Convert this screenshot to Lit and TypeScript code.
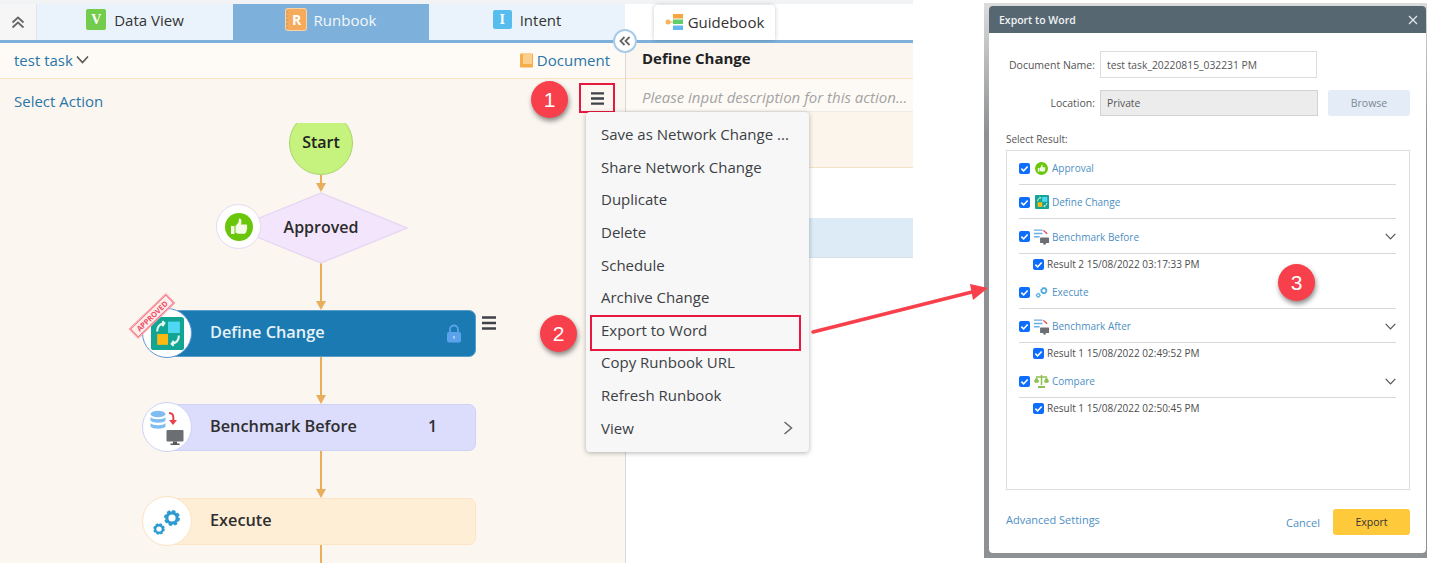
import { LitElement, html, css, svg } from 'lit';
import { customElement } from 'lit/decorators.js';

const menuItems = ['Save as Network Change ...', 'Share Network Change', 'Duplicate', 'Delete', 'Schedule', 'Archive Change', 'Export to Word', 'Copy Runbook URL', 'Refresh Runbook', 'View'];

const gear = (x: number, y: number, r: number, color: string) => svg`
  <g fill="none" stroke=${color}>
    <circle cx=${x} cy=${y} r=${r} stroke-width=${r * 0.62}></circle>
    <circle cx=${x} cy=${y} r=${r * 1.28} stroke-width=${r * 0.5} stroke-dasharray=${`${r * 0.6} ${r * 0.405}`}></circle>
  </g>`;

const defineIcon = (s: number) => html`<svg width=${s} height=${s} viewBox="0 0 32 32">
  <rect width="32" height="32" rx="2.5" fill="#12a594"></rect>
  <rect x="16.500" y="4.500" width="11.500" height="11" fill="#4fd8f4"></rect>
  <rect x="6" y="16.500" width="10.500" height="10.500" fill="#fdb813"></rect>
  <path d="M6 14c0-4 2-7 6-8M11 4l2 2-2 3M27 18c0 4-2 7-6 8M22 28l-2-2 2-3" fill="none" stroke="#e8f7f0" stroke-width="2"></path>
</svg>`;

const benchIcon = (s: number) => html`<svg width=${s} height=${s} viewBox="0 0 36 36">
  <ellipse cx="9" cy="5" rx="7.5" ry="3.2" fill="#7fbdf0"></ellipse>
  <path d="M1.5 8c2 3 13 3 15 0v3.500c-2 3-13 3-15 0zM1.500 14c2 3 13 3 15 0v3.500c-2 3-13 3-15 0z" fill="#7fbdf0"></path>
  <path d="M20 4c4 0 5 3 4 8" fill="none" stroke="#e9424c" stroke-width="2"></path>
  <path d="M20 11h8l-4 5z" fill="#e9424c"></path>
  <rect x="17.500" y="21" width="17" height="11.500" rx="1" fill="#6b6f73"></rect>
  <path d="M24 32.500h4v2h2.500v1.500h-9v-1.500H24z" fill="#55595c"></path>
</svg>`;

const smallBench = html`<svg width="17" height="17" viewBox="0 0 36 36">
  <path d="M2 3h18v3H2zM2 10h18v3H2zM2 17h12v3H2z" fill="#6aaee8"></path>
  <path d="M23 4l8 7-2 2-8-7z" fill="#e9424c"></path>
  <rect x="15" y="20" width="19" height="12" rx="1" fill="#6b6f73"></rect>
  <path d="M22 32h5v3h-5z" fill="#55595c"></path>
</svg>`;

const thumb = (s: number) => html`<svg width=${s} height=${s} viewBox="0 0 28 28">
  <circle cx="14" cy="14" r="14" fill="#69c60a"></circle>
  <path d="M6 13h3.500v8H6zM10.500 13l3-3.500 .5-4c2.500 0 3 2.500 2 6h5c1.500 0 1.500 2 .8 2.500 .8 .8 .6 2-.3 2.400 .6 1 .2 2-.6 2.300 .2 1.100-.4 2-1.400 2h-6.500l-2.500-1.200z" fill="#f4fbe9"></path>
</svg>`;

@customElement('app-root')
export class AppRoot extends LitElement {
  static styles = css`
    :host {
      display: block;
      position: relative;
      width: 1431px;
      height: 563px;
      overflow: hidden;
      background: #fff;
      font-family: "Open Sans", sans-serif;
      color: #333;
    }
    .page { display: flex; height: 563px; }

    /* left screenshot */
    .app {
      position: relative;
      width: 913px;
      flex: none;
      display: flex;
      flex-direction: column;
      padding-top: 4px;
      box-sizing: border-box;
      overflow: hidden;
      background: linear-gradient(#f2f3f5 4px, #fff 4px);
    }
    .tabbar {
      display: flex;
      height: 36px;
      flex: none;
      border-bottom: 3px solid #7db0da;
    }
    .tabs { display: flex; width: 625px; flex: none; }
    .collapse {
      width: 36px;
      flex: none;
      display: flex;
      align-items: center;
      justify-content: center;
      background: #f6f6f6;
      border-right: 1px solid #dbe6f0;
    }
    .tab {
      flex: 1;
      display: flex;
      align-items: center;
      justify-content: center;
      gap: 8px;
      padding-bottom: 5px;
      background: #eaf3fb;
      font-size: 15px;
      color: #333;
    }
    .tab.active { background: #7db0da; color: #f4f8fb; }
    .tab-sq {
      width: 20px;
      height: 21px;
      border-radius: 2px;
      display: flex;
      align-items: center;
      justify-content: center;
      color: #fff;
      font: bold 14px "Liberation Serif", serif;
    }
    .tab-sq.v { background: #74cc4c; }
    .tab-sq.i { background: #56bdee; width: 19px; height: 19px; }
    .tab-sq.r {
      background: #f6ab5c;
      border-left: 2px dotted #d9a268;
      width: 18px;
      font: bold 14px "Open Sans", sans-serif;
      box-shadow: 0 0 0 1px #f9d3a4;
    }
    .guide-wrap { flex: 1; display: flex; padding-left: 29px; }
    .guide {
      width: 121px;
      height: 35px;
      margin-top: 1px;
      box-sizing: border-box;
      padding-bottom: 2px;
      display: flex;
      align-items: center;
      justify-content: center;
      gap: 4px;
      background: #fff;
      border-radius: 4px 4px 0 0;
      box-shadow: 0 0 4px rgba(0,0,0,.22);
      font-size: 15px;
      color: #333;
    }

    .body { flex: 1; display: flex; min-height: 0; }
    .left {
      position: relative;
      width: 625px;
      flex: none;
      background: #fbf6f0;
      border-right: 1px solid #d9d9d9;
    }
    .subhead {
      height: 36px;
      box-sizing: border-box;
      display: flex;
      align-items: center;
      justify-content: space-between;
      padding: 0 15px 2px 14px;
      background: #fefbf6;
      border-bottom: 1px solid #fbe2bf;
      font-size: 15px;
      color: #2a76a8;
    }
    .task { display: flex; align-items: center; gap: 3px; }
    .doc { display: flex; align-items: center; gap: 3px; }
    .select {
      padding: 12px 14px 0;
      font-size: 15px;
      color: #2a76a8;
    }
    .right { flex: 1; }
    .r-head {
      height: 36px;
      box-sizing: border-box;
      display: flex;
      align-items: center;
      padding: 0 0 6px 16px;
      background: #fbf6f0;
      border-bottom: 1px solid #fbe2bf;
      font-size: 15px;
      font-weight: 700;
      color: #222;
    }
    .r-desc {
      height: 33px;
      box-sizing: border-box;
      display: flex;
      align-items: center;
      padding: 3px 0 0 16px;
      background: #fdfaf6;
      border-bottom: 1px solid #f0ebe4;
      font-size: 15px;
      font-style: italic;
      color: #a3a3a3;
      white-space: nowrap;
    }
    .r-band { height: 56px; box-sizing: border-box; background: #fcf5ec; border-bottom: 1px solid #f4e1c8; }
    .r-sel { margin-top: 50px; height: 40px; box-sizing: border-box; background: #dcebf5; border-bottom: 1px solid #d5e0e8; }

    /* flow diagram: free canvas */
    .flow { position: absolute; left: 0; top: 80px; width: 625px; height: 440px; overflow: hidden; }
    .line { position: absolute; left: 320px; width: 2px; background: #e9ae5b; }
    .head {
      position: absolute;
      left: 316px;
      width: 0;
      height: 0;
      border-left: 5px solid transparent;
      border-right: 5px solid transparent;
      border-top: 9px solid #e9ae5b;
    }
    .start {
      position: absolute;
      left: 289px;
      top: -12px;
      width: 64px;
      height: 64px;
      box-sizing: border-box;
      border-radius: 50%;
      background: #c5f37d;
      border: 1.5px solid #a8d56c;
      display: flex;
      align-items: center;
      justify-content: center;
      padding-bottom: 2px;
      font-size: 16px;
      font-weight: 600;
      color: #222;
    }
    .diamond { position: absolute; left: 235px; top: 69px; }
    .diamond-label {
      position: absolute;
      left: 253px;
      top: 69px;
      width: 136px;
      height: 70px;
      display: flex;
      align-items: center;
      justify-content: center;
      font-size: 16px;
      font-weight: 600;
      color: #2b2b2b;
    }
    .thumb-circle {
      position: absolute;
      left: 216px;
      top: 81px;
      width: 45px;
      height: 45px;
      box-sizing: border-box;
      border-radius: 50%;
      background: #fff;
      border: 1px solid #e6d9f3;
      display: flex;
      align-items: center;
      justify-content: center;
    }
    .node {
      position: absolute;
      left: 160px;
      width: 316px;
      height: 47px;
      box-sizing: border-box;
      border-radius: 7px;
      display: flex;
      align-items: center;
      padding: 0 0 3px 49px;
      font-size: 16.300px;
      font-weight: 600;
      color: #2f2f2f;
    }
    .node.define { top: 187px; background: #1a7ab1; border: 1px solid #5a9fca; color: #e8f2f8; }
    .node.bench { top: 281px; background: #dcdcfc; border: 1px solid #cdd3f7; }
    .node.exec { top: 375px; background: #ffeed6; border: 1px solid #fbe5c6; }
    .count { position: absolute; left: 267px; font-size: 16px; font-weight: 600; }
    .lock { position: absolute; left: 285px; top: 13px; }
    .disc {
      position: absolute;
      left: 142px;
      width: 50px;
      height: 50px;
      box-sizing: border-box;
      border-radius: 50%;
      background: #fff;
      display: flex;
      align-items: center;
      justify-content: center;
    }
    .disc.define { top: 185px; border: 1.5px solid #5f96d3; }
    .disc.bench { top: 279px; border: 1.5px solid #ccd3f7; }
    .disc.exec { top: 373px; border: 1.5px solid #fbe3c0; }
    .stamp {
      position: absolute;
      left: 127px;
      top: 187px;
      width: 50px;
      height: 12px;
      box-sizing: border-box;
      border: 1px solid #f2707f;
      outline: 1px solid #f8a4ae;
      background: #fdeeee;
      transform: rotate(-44deg);
      display: flex;
      align-items: center;
      justify-content: center;
      font-size: 7.500px;
      font-weight: 700;
      color: #ee4f62;
    }
    .node-menu { position: absolute; left: 482px; top: 193px; }

    .burger { display: block; }
    .burger-box {
      position: absolute;
      left: 579px;
      top: 40px;
      width: 36px;
      height: 30px;
      box-sizing: border-box;
      border: 2px solid #e8173f;
      display: flex;
      align-items: center;
      justify-content: center;
    }

    /* round collapse handle on the divider */
    .handle {
      position: absolute;
      left: 613px;
      top: 29px;
      width: 24px;
      height: 24px;
      box-sizing: border-box;
      border-radius: 50%;
      background: #fff;
      border: 2px solid #a9cbe8;
      display: flex;
      align-items: center;
      justify-content: center;
    }

    /* context menu */
    .menu {
      position: absolute;
      left: 586px;
      top: 112px;
      width: 223px;
      height: 340px;
      box-sizing: border-box;
      padding: 6px 0 0 15px;
      background: #f7f7f7;
      border-radius: 4px;
      box-shadow: 0 1px 5px rgba(0,0,0,.3);
    }
    .menu-item {
      height: 32.600px;
      display: flex;
      align-items: center;
      justify-content: space-between;
      padding-right: 16px;
      font-size: 15px;
      color: #3c3f45;
      white-space: nowrap;
    }
    .export-box {
      position: absolute;
      left: 590px;
      top: 315px;
      width: 211px;
      height: 36px;
      box-sizing: border-box;
      border: 2px solid #e8173f;
    }

    /* annotations */
    .mark {
      position: absolute;
      width: 37px;
      height: 37px;
      border-radius: 50%;
      background: #f7404b;
      box-shadow: 1px 3px 5px rgba(0,0,0,.45);
      display: flex;
      align-items: center;
      justify-content: center;
      color: #fff;
      font: 21px "Liberation Sans", sans-serif;
    }
    .arrow { position: absolute; left: 800px; top: 270px; }

    /* export dialog */
    .shot {
      margin: 3px 0 0 71px;
      width: 443px;
      height: 555px;
      box-sizing: border-box;
      padding: 3px 1px 5px 5px;
      background: linear-gradient(#dcdcdc, #8d9193 130px);
      flex: none;
    }
    .dialog {
      height: 547px;
      display: flex;
      flex-direction: column;
      background: #fff;
      border-radius: 4px;
      overflow: hidden;
      font-size: 10px;
      color: #555;
    }
    .dlg-head {
      height: 27px;
      flex: none;
      display: flex;
      align-items: center;
      justify-content: space-between;
      padding: 0 8px 0 10px;
      background: #566772;
      color: #f0f3f4;
      font-size: 10.5px;
      font-weight: 600;
    }
    .dlg-body { flex: 1; display: flex; flex-direction: column; padding: 18px 16px 18px 17px; }
    .field { display: flex; align-items: center; gap: 5px; }
    .field + .field { margin-top: 12px; }
    .field label { width: 89px; flex: none; text-align: right; font-size: 10.5px; color: #555; }
    .input {
      width: 217px;
      height: 27px;
      box-sizing: border-box;
      display: flex;
      align-items: center;
      padding-left: 6px;
      border: 1px solid #ddd;
      font-size: 10.3px;
      color: #555;
    }
    .input.off { height: 26px; width: 218px; background: #ececec; border-color: #d2d2d2; }
    .browse {
      width: 82px;
      height: 26px;
      margin-left: 5px;
      display: flex;
      align-items: center;
      justify-content: center;
      background: #e3ecf7;
      border-radius: 3px;
      color: #7c8894;
      font-size: 10.5px;
    }
    .sel-label { margin-top: 16px; font-size: 10px; color: #555; }
    .results {
      height: 340px;
      box-sizing: border-box;
      margin-top: 4px;
      padding: 0 13px 0 12px;
      border: 1px solid #ddd;
    }
    .res {
      height: 35px;
      box-sizing: border-box;
      display: flex;
      align-items: center;
      gap: 1px;
      padding-top: 1px;
      border-bottom: 1px solid #d8d8d8;
      color: #4d8fc4;
      font-size: 10px;
    }
    .res.short { height: 33px; padding-top: 0; }
    .res.mid { height: 34px; }
    .res .spacer { flex: 1; }
    .res-ico { width: 17px; height: 17px; margin-right: 1px; display: flex; align-items: center; justify-content: center; }
    .sub {
      height: 22px;
      box-sizing: border-box;
      display: flex;
      align-items: center;
      gap: 1px;
      padding: 0 0 2px 14px;
      font-size: 10px;
      color: #4c4c4c;
    }
    .check {
      width: 11px;
      height: 11px;
      flex: none;
      margin-right: 2px;
      border-radius: 2px;
      background: #0d6efd;
      display: flex;
      align-items: center;
      justify-content: center;
    }
    .dlg-foot { display: flex; align-items: center; margin-top: 19px; }
    .adv { color: #4d8fc4; font-size: 11px; margin-top: -5px; }
    .foot-right { margin-left: auto; display: flex; align-items: center; gap: 13px; }
    .cancel { color: #4d8fc4; font-size: 11px; }
    .export {
      width: 77px;
      height: 26px;
      display: flex;
      align-items: center;
      justify-content: center;
      background: #ffc93c;
      border-radius: 3px;
      color: #333;
      font-size: 10.5px;
    }
  `;

  private burger(w: number) {
    return html`<svg class="burger" width=${w} height=${w} viewBox="0 0 14 14"><path d="M0 1.500h14M0 7h14M0 12.500h14" stroke="#3f4247" stroke-width="2.600"></path></svg>`;
  }

  private check() {
    return html`<span class="check"><svg width="9" height="9" viewBox="0 0 10 10"><path d="M1.500 5.200l2.500 2.500 4.500-5" fill="none" stroke="#fff" stroke-width="1.800"></path></svg></span>`;
  }

  private chevron() {
    return html`<svg width="11" height="7" viewBox="0 0 11 7"><path d="M.7 .8l4.800 5 4.800-5" fill="none" stroke="#555" stroke-width="1.200"></path></svg>`;
  }

  private tabs() {
    return html`<div class="tabbar">
      <div class="tabs">
        <div class="collapse"><svg width="14" height="13" viewBox="0 0 14 13"><path d="M1.500 6.500L7 1.500l5.500 5M1.500 11.500L7 6.500l5.500 5" fill="none" stroke="#666" stroke-width="1.800"></path></svg></div>
        <div class="tab"><span class="tab-sq v">V</span>Data View</div>
        <div class="tab active"><span class="tab-sq r">R</span>Runbook</div>
        <div class="tab"><span class="tab-sq i">I</span>Intent</div>
      </div>
      <div class="guide-wrap">
        <div class="guide">
          <svg width="19" height="20" viewBox="0 0 19 20">
            <circle cx="3" cy="10" r="2.500" fill="#f7b25c"></circle>
            <path d="M5 10h3" stroke="#f7b25c" stroke-width="1"></path>
            <rect x="8" y="2" width="10" height="4.500" fill="#f7a440"></rect>
            <rect x="8" y="7.500" width="10" height="4.500" fill="#5fcf6a"></rect>
            <rect x="8" y="13.500" width="10" height="4.500" fill="#62b8ee"></rect>
          </svg>
          Guidebook
        </div>
      </div>
    </div>`;
  }

  private flow() {
    return html`<div class="flow">
      <div class="line" style="top:52px;height:10px"></div><div class="head" style="top:60px"></div>
      <div class="line" style="top:139px;height:40px"></div><div class="head" style="top:178px"></div>
      <div class="line" style="top:233px;height:40px"></div><div class="head" style="top:272px"></div>
      <div class="line" style="top:328px;height:40px"></div><div class="head" style="top:366px"></div>
      <div class="line" style="top:421px;height:19px"></div>

      <div class="start">Start</div>
      <svg class="diamond" width="175" height="72" viewBox="0 0 175 72"><path d="M86 1l86 35-86 35-86-35z" fill="#f3e6fc" stroke="#e7d8f3" stroke-width="1.500"></path></svg>
      <div class="diamond-label">Approved</div>
      <div class="thumb-circle">${thumb(28)}</div>

      <div class="node define">Define Change
        <svg class="lock" width="16" height="19" viewBox="0 0 16 19"><path d="M4 9V5.500a4 4 0 018 0V9" fill="none" stroke="#5aa2ec" stroke-width="1.800"></path><rect x="1" y="8" width="14" height="10.500" rx="2" fill="#5aa2ec"></rect><rect x="7.300" y="12" width="1.400" height="2.500" fill="#cfe4fa"></rect></svg>
      </div>
      <div class="disc define">${defineIcon(33)}</div>
      <div class="stamp">APPROVED</div>
      <div class="node-menu">${this.burger(14)}</div>

      <div class="node bench">Benchmark Before<span class="count">1</span></div>
      <div class="disc bench">${benchIcon(36)}</div>

      <div class="node exec">Execute</div>
      <div class="disc exec"><svg width="30" height="28" viewBox="0 0 30 28">${gear(20, 11, 5.200, '#2e9bd0')}${gear(7, 22, 3.800, '#2e9bd0')}</svg></div>
    </div>`;
  }

  private dialog() {
    return html`<div class="shot"><div class="dialog">
      <div class="dlg-head">Export to Word
        <svg width="10" height="10" viewBox="0 0 10 10"><path d="M1 1l8 8M9 1L1 9" stroke="#e4e9ec" stroke-width="1.200"></path></svg>
      </div>
      <div class="dlg-body">
        <div class="field"><label>Document Name:</label><div class="input">test task_20220815_032231 PM</div></div>
        <div class="field"><label>Location:</label><div class="input off">Private</div><div class="browse">Browse</div></div>
        <div class="sel-label">Select Result:</div>
        <div class="results">
          <div class="res mid">${this.check()}<span class="res-ico">${thumb(13)}</span>Approval</div>
          <div class="res mid">${this.check()}<span class="res-ico">${defineIcon(14)}</span>Define Change</div>
          <div class="res">${this.check()}<span class="res-ico">${smallBench}</span>Benchmark Before<span class="spacer"></span>${this.chevron()}</div>
          <div class="sub">${this.check()}Result 2 15/08/2022 03:17:33 PM</div>
          <div class="res short">${this.check()}<span class="res-ico"><svg width="14" height="13" viewBox="0 0 30 28">${gear(19, 10, 5, '#4aa8dc')}${gear(7, 20, 3.500, '#4aa8dc')}</svg></span>Execute</div>
          <div class="res mid">${this.check()}<span class="res-ico">${smallBench}</span>Benchmark After<span class="spacer"></span>${this.chevron()}</div>
          <div class="sub">${this.check()}Result 1 15/08/2022 02:49:52 PM</div>
          <div class="res short">${this.check()}<span class="res-ico"><svg width="15" height="14" viewBox="0 0 15 14"><path d="M7.500 1v10M2 3h11" stroke="#8cc152" stroke-width="1.500"></path><path d="M0 7l2.500-4L5 7a2.500 2 0 01-5 0zM10 7l2.500-4L15 7a2.500 2 0 01-5 0zM4 12h7v2H4z" fill="#8cc152"></path></svg></span>Compare<span class="spacer"></span>${this.chevron()}</div>
          <div class="sub">${this.check()}Result 1 15/08/2022 02:50:45 PM</div>
        </div>
        <div class="dlg-foot">
          <span class="adv">Advanced Settings</span>
          <div class="foot-right"><span class="cancel">Cancel</span><div class="export">Export</div></div>
        </div>
      </div>
    </div></div>`;
  }

  render() {
    return html`<div class="page">
      <div class="app">
        ${this.tabs()}
        <div class="body">
          <div class="left">
            <div class="subhead">
              <span class="task">test task
                <svg width="13" height="9" viewBox="0 0 13 9"><path d="M1 1.500l5.500 6 5.500-6" fill="none" stroke="#555" stroke-width="1.600"></path></svg>
              </span>
              <span class="doc">
                <svg width="14" height="16" viewBox="0 0 14 16"><rect x="0" y="1.500" width="13" height="14" rx="1" fill="#f6ae4b"></rect><rect x="3" y="1" width="9" height="11" fill="#fbd08f"></rect></svg>
                Document
              </span>
            </div>
            <div class="select">Select Action</div>
            ${this.flow()}
            <div class="burger-box">${this.burger(13)}</div>
          </div>
          <div class="right">
            <div class="r-head">Define Change</div>
            <div class="r-desc">Please input description for this action...</div>
            <div class="r-band"></div>
            <div class="r-sel"></div>
          </div>
        </div>
        <div class="handle"><svg width="12" height="10" viewBox="0 0 12 10"><path d="M5.500 1L1.500 5l4 4M10.500 1l-4 4 4 4" fill="none" stroke="#666" stroke-width="1.800"></path></svg></div>
      </div>
      ${this.dialog()}
    </div>

    <div class="menu">
      ${menuItems.map((m) => html`<div class="menu-item">${m}${m === 'View' ? html`<svg width="10" height="14" viewBox="0 0 10 14"><path d="M1.500 1l7 6-7 6" fill="none" stroke="#666" stroke-width="1.500"></path></svg>` : ''}</div>`)}
    </div>
    <div class="export-box"></div>
    <div class="mark" style="left:531px;top:81px">1</div>
    <div class="mark" style="left:540px;top:315px">2</div>
    <div class="mark" style="left:1278px;top:264px">3</div>
    <svg class="arrow" width="200" height="70" viewBox="0 0 200 70"><path d="M13 62L176 21" stroke="#f7404b" stroke-width="3.500" stroke-linecap="round"></path><path d="M188 18l-18-4 3 16z" fill="#f7404b"></path></svg>`;
  }
}
